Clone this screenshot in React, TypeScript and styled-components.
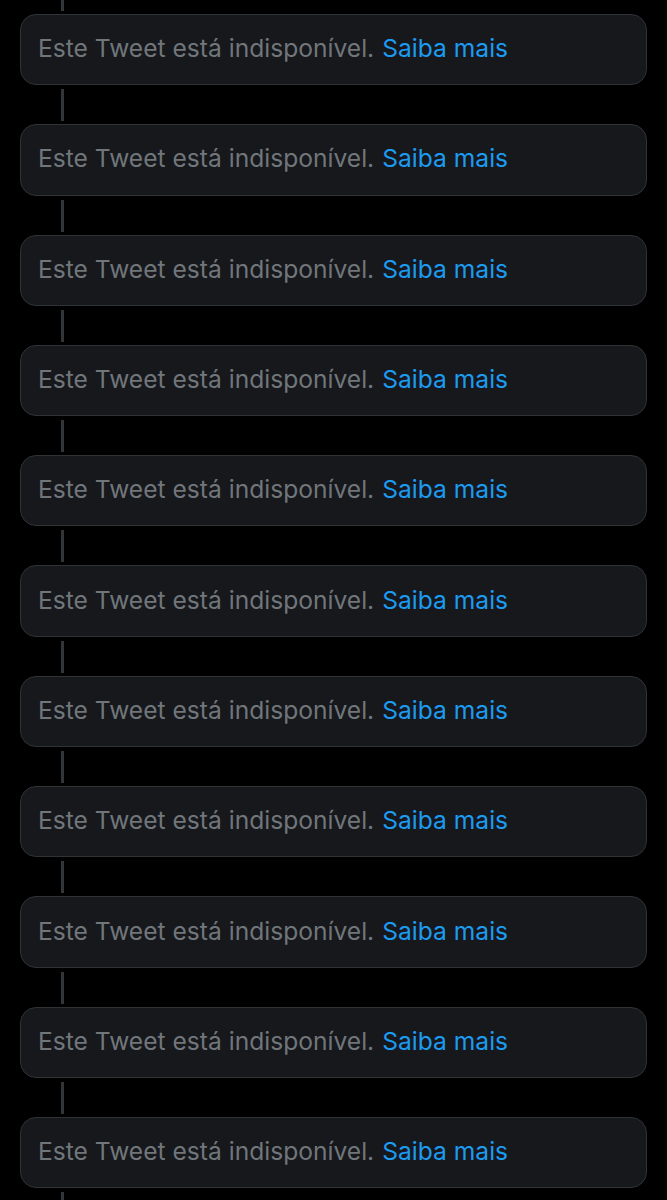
import React from "react";
import styled, { createGlobalStyle } from "styled-components";

const Global = createGlobalStyle`
  html, body { margin: 0; padding: 0; background: #000; }
  body { font-family: Inter, "Noto Sans", Roboto, sans-serif; }
`;

const Page = styled.div`
  background: #000;
  padding: 0 20px 0 20px;
  display: flex;
  flex-direction: column;
  overflow: hidden;
  height: 1200px;
  box-sizing: border-box;
`;

const Connector = styled.div<{ $h: number; $top: number; $bottom: number }>`
  width: 3px;
  height: ${(p) => p.$h}px;
  margin: ${(p) => p.$top}px 0 ${(p) => p.$bottom}px 41px;
  background: #333639;
  flex-shrink: 0;
`;

const Card = styled.div`
  flex-shrink: 0;
  height: 71.3px;
  box-sizing: border-box;
  border: 1px solid #2f3336;
  border-radius: 16px;
  background: #16181c;
  display: flex;
  align-items: center;
  padding: 0 17px 3px 17px;
  font-size: 24.6px;
  color: #71767b;
  white-space: nowrap;
`;

const Link = styled.a`
  color: #1d9bf0;
  text-decoration: none;
  margin-left: 8px;
`;

export default function App() {
  const items = Array.from({ length: 11 });
  return (
    <>
      <Global />
      <Page>
        <Connector $h={11} $top={0} $bottom={3} />
        {items.map((_, i) => (
          <React.Fragment key={i}>
            <Card>
              Este Tweet está indisponível.<Link href="#">Saiba mais</Link>
            </Card>
            <Connector $h={32} $top={4} $bottom={3} />
          </React.Fragment>
        ))}
      </Page>
    </>
  );
}
